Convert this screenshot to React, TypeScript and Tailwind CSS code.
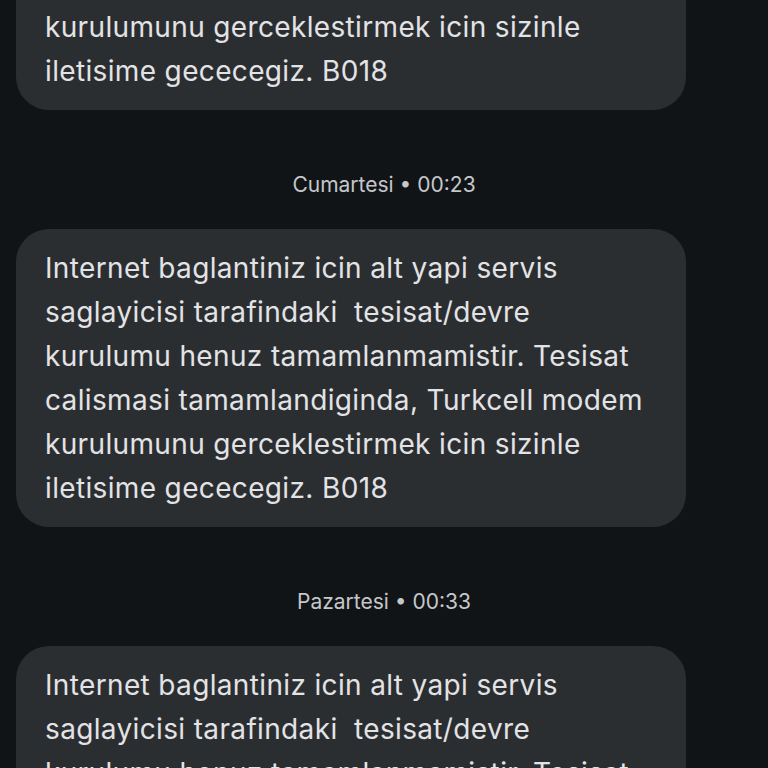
import React from "react";

const lines = [
  "Internet baglantiniz icin alt yapi servis",
  "saglayicisi tarafindaki  tesisat/devre",
  "kurulumu henuz tamamlanmamistir. Tesisat",
  "calismasi tamamlandiginda, Turkcell modem",
  "kurulumunu gerceklestirmek icin sizinle",
  "iletisime gececegiz. B018",
];

function Bubble() {
  return (
    <div className="w-[670px] rounded-[33px] bg-[#2b2e31] px-[29px] py-[17px] text-[28px] leading-[44px] tracking-[0.35px] text-[#e3e3e6]">
      {lines.map((l, i) => (
        <div key={i} className="whitespace-pre">
          {l}
        </div>
      ))}
    </div>
  );
}

function Stamp({ text }: { text: string }) {
  return (
    <div className="flex h-[119px] items-center justify-center pt-[31px] text-[21px] text-[#c5c7ca]">
      {text}
    </div>
  );
}

export default function App() {
  return (
    <div
      className="h-[768px] w-[768px] overflow-hidden bg-[#111417]"
      style={{ fontFamily: "Inter, Roboto, sans-serif" }}
    >
      <div className="-mt-[188px] flex flex-col px-4">
        <Bubble />
        <Stamp text="Cumartesi • 00:23" />
        <Bubble />
        <Stamp text="Pazartesi • 00:33" />
        <Bubble />
      </div>
    </div>
  );
}
